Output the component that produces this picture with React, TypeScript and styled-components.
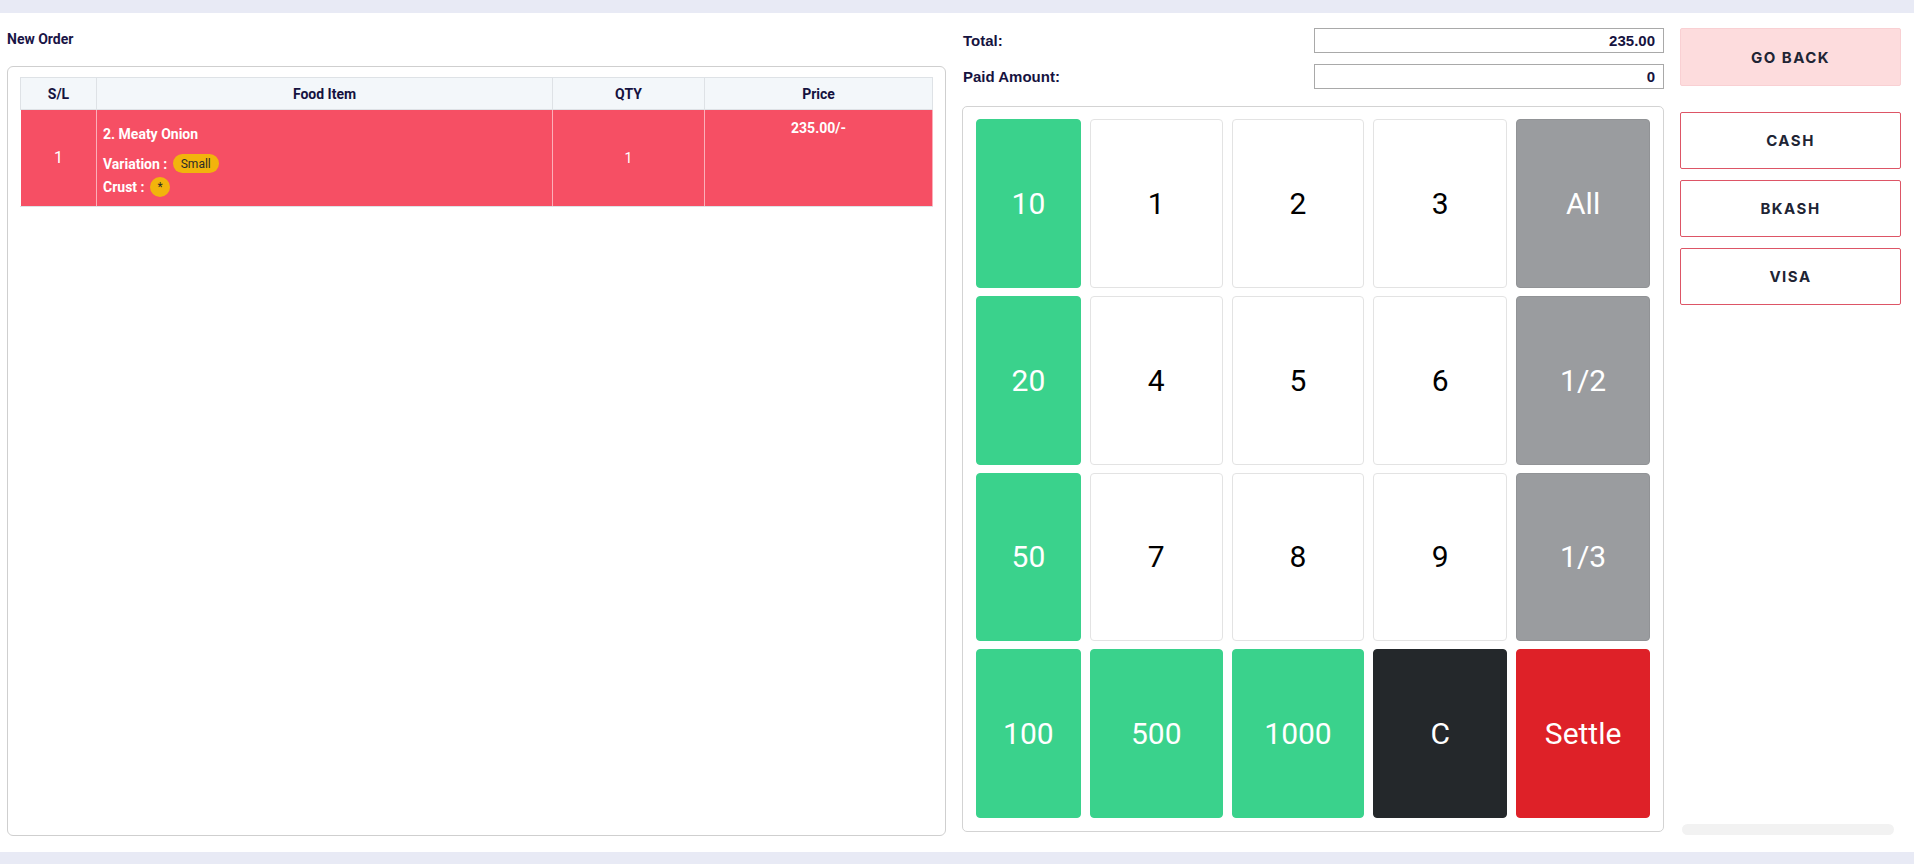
import React from "react";
import styled, { createGlobalStyle, css } from "styled-components";

const GlobalStyle = createGlobalStyle`
  html, body {
    margin: 0;
    padding: 0;
    background: #e8eaf5;
  }
  body {
    font-family: Roboto, "Noto Sans", sans-serif;
  }
  *, *::before, *::after {
    box-sizing: border-box;
  }
`;

const Page = styled.div`
  padding: 13px 0 12px;
`;

const Panel = styled.div`
  background: #ffffff;
  height: 839px;
  display: grid;
  grid-template-columns: 939px 702px 221px;
  column-gap: 16px;
  padding: 15px 13px 16px 7px;
`;

const Column = styled.div`
  display: flex;
  flex-direction: column;
  min-height: 0;
`;

const Heading = styled.h6`
  margin: 0 0 16px;
  font: 700 14px/22px Roboto, sans-serif;
  color: #1a1446;
`;

const OrderCard = styled.div`
  flex: 1;
  border: 1px solid #cfcfcf;
  border-radius: 6px;
  padding: 10px 12px;
`;

const Table = styled.table`
  width: 912px;
  border-collapse: collapse;
  table-layout: fixed;
`;

const Th = styled.th`
  background: #f3f7fa;
  border: 1px solid #dee2e6;
  height: 32px;
  padding: 0 6px;
  font: 700 14px Roboto, sans-serif;
  color: #15123f;
  text-align: center;
`;

const Td = styled.td<{ $valign?: string; $align?: string; $size?: number; $bold?: boolean; $padTop?: number }>`
  background: #f64f64;
  border: 1px solid rgba(255, 255, 255, 0.55);
  border-bottom-color: #dee2e6;
  border-top-color: #dee2e6;
  height: 96px;
  padding: ${(p) => p.$padTop ?? 8}px 6px 8px;
  color: #ffffff;
  font-family: Roboto, sans-serif;
  font-size: ${(p) => p.$size ?? 14}px;
  font-weight: ${(p) => (p.$bold ? 700 : 400)};
  line-height: 20px;
  vertical-align: ${(p) => p.$valign ?? "middle"};
  text-align: ${(p) => p.$align ?? "center"};
`;

const ItemName = styled.div`
  font-weight: 700;
  line-height: 20px;
  margin-bottom: 8px;
`;

const ItemLine = styled.div`
  display: flex;
  align-items: center;
  height: 23px;
  font-weight: 700;
  white-space: pre;
`;

const Badge = styled.span<{ $round?: boolean }>`
  display: inline-flex;
  align-items: center;
  justify-content: center;
  margin-left: 2px;
  height: ${(p) => (p.$round ? 20 : 19)}px;
  min-width: ${(p) => (p.$round ? 20 : 46)}px;
  padding: ${(p) => (p.$round ? "0" : "0 7px")};
  border-radius: 10px;
  background: #f2b40c;
  color: #2a2a2a;
  font-size: 12px;
  font-weight: 400;
  line-height: 1;
`;

const AmountRow = styled.div<{ $gap: number }>`
  display: flex;
  align-items: center;
  justify-content: space-between;
  height: 25px;
  margin-bottom: ${(p) => p.$gap}px;
`;

const AmountLabel = styled.label`
  font: 700 15px "Liberation Sans", Arial, sans-serif;
  color: #16133f;
  padding-left: 1px;
`;

const AmountInput = styled.input`
  width: 350px;
  height: 25px;
  border: 1px solid #a9a9a9;
  border-radius: 0;
  padding: 0 8px;
  text-align: right;
  font: 700 15px "Liberation Sans", Arial, sans-serif;
  color: #16133f;
  background: #fff;
  outline: none;
`;

const KeypadCard = styled.div`
  flex: 1;
  margin-bottom: 4px;
  border: 1px solid #d3d3d3;
  border-radius: 5px;
  padding: 12px 13px 13px;
  display: grid;
  grid-template-columns: 105fr 133fr 133fr 134fr 134fr;
  grid-template-rows: repeat(4, 1fr);
  gap: 8px 9px;
`;

type Variant = "green" | "white" | "gray" | "dark" | "red";

const variants: Record<Variant, ReturnType<typeof css>> = {
  green: css`
    background: #3ad28c;
    border-color: #3ad28c;
    color: #ffffff;
  `,
  white: css`
    background: #ffffff;
    border-color: #e3e3e3;
    color: #000000;
  `,
  gray: css`
    background: #9a9c9f;
    border-color: #919396;
    color: #ffffff;
  `,
  dark: css`
    background: #24282b;
    border-color: #24282b;
    color: #ffffff;
  `,
  red: css`
    background: #de2128;
    border-color: #de2128;
    color: #ffffff;
  `,
};

const Key = styled.button<{ $variant: Variant }>`
  border: 1px solid;
  border-radius: 4px;
  font: 400 30px Roboto, sans-serif;
  display: flex;
  align-items: center;
  justify-content: center;
  padding: 0;
  cursor: pointer;
  ${(p) => variants[p.$variant]}
`;

const ActionButton = styled.button<{ $primary?: boolean }>`
  height: ${(p) => (p.$primary ? 58 : 57)}px;
  margin-bottom: ${(p) => (p.$primary ? 26 : 11)}px;
  border-radius: 2px;
  border: 1px solid ${(p) => (p.$primary ? "#f9d0d3" : "#dd5566")};
  background: ${(p) => (p.$primary ? "#fddcdd" : "#ffffff")};
  color: #202434;
  font: 700 15px Inter, "Open Sans", sans-serif;
  letter-spacing: 1.5px;
  cursor: pointer;
`;

const ScrollTrack = styled.div`
  margin: auto 7px 1px 2px;
  height: 11px;
  border-radius: 6px;
  background: #f2f2f2;
`;

const keys: { label: string; variant: Variant }[] = [
  { label: "10", variant: "green" },
  { label: "1", variant: "white" },
  { label: "2", variant: "white" },
  { label: "3", variant: "white" },
  { label: "All", variant: "gray" },
  { label: "20", variant: "green" },
  { label: "4", variant: "white" },
  { label: "5", variant: "white" },
  { label: "6", variant: "white" },
  { label: "1/2", variant: "gray" },
  { label: "50", variant: "green" },
  { label: "7", variant: "white" },
  { label: "8", variant: "white" },
  { label: "9", variant: "white" },
  { label: "1/3", variant: "gray" },
  { label: "100", variant: "green" },
  { label: "500", variant: "green" },
  { label: "1000", variant: "green" },
  { label: "C", variant: "dark" },
  { label: "Settle", variant: "red" },
];

export default function App() {
  return (
    <>
      <GlobalStyle />
      <Page>
        <Panel>
          <Column>
            <Heading>New Order</Heading>
            <OrderCard>
              <Table>
                <colgroup>
                  <col style={{ width: 76 }} />
                  <col style={{ width: 456 }} />
                  <col style={{ width: 152 }} />
                  <col style={{ width: 228 }} />
                </colgroup>
                <thead>
                  <tr>
                    <Th>S/L</Th>
                    <Th>Food Item</Th>
                    <Th>QTY</Th>
                    <Th>Price</Th>
                  </tr>
                </thead>
                <tbody>
                  <tr>
                    <Td $size={16}>1</Td>
                    <Td $align="left" $padTop={14}>
                      <ItemName>2. Meaty Onion</ItemName>
                      <ItemLine>
                        {"Variation : "}
                        <Badge>Small</Badge>
                      </ItemLine>
                      <ItemLine>
                        {"Crust : "}
                        <Badge $round>*</Badge>
                      </ItemLine>
                    </Td>
                    <Td>1</Td>
                    <Td $valign="top" $bold>
                      235.00/-
                    </Td>
                  </tr>
                </tbody>
              </Table>
            </OrderCard>
          </Column>

          <Column>
            <AmountRow $gap={11}>
              <AmountLabel>Total:</AmountLabel>
              <AmountInput readOnly value="235.00" />
            </AmountRow>
            <AmountRow $gap={17}>
              <AmountLabel>Paid Amount:</AmountLabel>
              <AmountInput readOnly value="0" />
            </AmountRow>
            <KeypadCard>
              {keys.map((k) => (
                <Key key={k.label} $variant={k.variant}>
                  {k.label}
                </Key>
              ))}
            </KeypadCard>
          </Column>

          <Column>
            <ActionButton $primary>GO BACK</ActionButton>
            <ActionButton>CASH</ActionButton>
            <ActionButton>BKASH</ActionButton>
            <ActionButton>VISA</ActionButton>
            <ScrollTrack />
          </Column>
        </Panel>
      </Page>
    </>
  );
}
